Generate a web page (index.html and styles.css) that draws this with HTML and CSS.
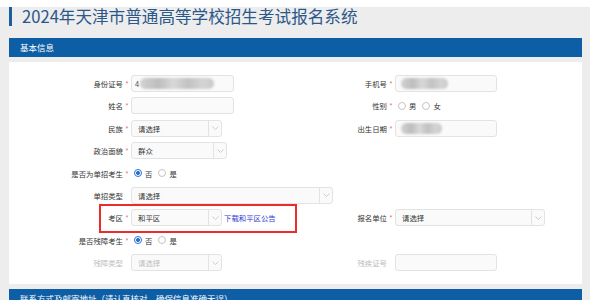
FILE: index.html
```html
<!DOCTYPE html>
<html lang="zh-CN">
<head>
    <meta charset="UTF-8">
    <meta name="viewport" content="width=device-width, initial-scale=1.0">
    <title>2024年天津市普通高等学校招生考试报名系统</title>
    <link rel="stylesheet" href="styles.css">
</head>
<body>
    <div class="page">
        <h1 class="title">2024年天津市普通高等学校招生考试报名系统</h1>
        <div class="panel-head">基本信息</div>
        <div class="panel-body">
            <div class="form">
                <!-- 第1行 -->
                <div class="field">
                    <span class="lbl">身份证号</span><span class="req">*</span>
                    <div class="input w103"><span class="pre">4</span><span class="blur w74"></span></div>
                </div>
                <div class="field">
                    <span class="lbl">手机号</span><span class="req">*</span>
                    <div class="input w102"><span class="blur w47"></span></div>
                </div>
                <!-- 第2行 -->
                <div class="field">
                    <span class="lbl">姓名</span><span class="req">*</span>
                    <div class="input w103"></div>
                </div>
                <div class="field">
                    <span class="lbl">性别</span><span class="req">*</span>
                    <div class="radios">
                        <span class="radio"></span><span class="opt">男</span>
                        <span class="radio"></span><span class="opt">女</span>
                    </div>
                </div>
                <!-- 第3行 -->
                <div class="field">
                    <span class="lbl">民族</span><span class="req">*</span>
                    <div class="select w91">
                        <span class="val">请选择</span>
                        <span class="arrow"><svg width="7" height="4" viewBox="0 0 7 4"><polyline points="0.5,0.5 3.5,3.5 6.5,0.5"/></svg></span>
                    </div>
                </div>
                <div class="field">
                    <span class="lbl">出生日期</span><span class="req">*</span>
                    <div class="input w102"><span class="blur w41"></span></div>
                </div>
                <!-- 第4行 -->
                <div class="field">
                    <span class="lbl">政治面貌</span><span class="req">*</span>
                    <div class="select w96">
                        <span class="val">群众</span>
                        <span class="arrow"><svg width="7" height="4" viewBox="0 0 7 4"><polyline points="0.5,0.5 3.5,3.5 6.5,0.5"/></svg></span>
                    </div>
                </div>
                <div></div>
                <!-- 第5行 -->
                <div class="field">
                    <span class="lbl">是否为单招考生</span><span class="req">*</span>
                    <div class="radios">
                        <span class="radio on"></span><span class="opt">否</span>
                        <span class="radio"></span><span class="opt">是</span>
                    </div>
                </div>
                <div></div>
                <!-- 第6行 -->
                <div class="field">
                    <span class="lbl">单招类型</span><span class="req"></span>
                    <div class="select w202">
                        <span class="val">请选择</span>
                        <span class="arrow"><svg width="7" height="4" viewBox="0 0 7 4"><polyline points="0.5,0.5 3.5,3.5 6.5,0.5"/></svg></span>
                    </div>
                </div>
                <div></div>
                <!-- 第7行 考区（红框标注） -->
                <div class="field mark">
                    <span class="lbl">考区</span><span class="req">*</span>
                    <div class="select w91">
                        <span class="val">和平区</span>
                        <span class="arrow"><svg width="7" height="4" viewBox="0 0 7 4"><polyline points="0.5,0.5 3.5,3.5 6.5,0.5"/></svg></span>
                    </div>
                    <a class="link" href="#">下载和平区公告</a>
                </div>
                <div class="field">
                    <span class="lbl">报名单位</span><span class="req">*</span>
                    <div class="select w150">
                        <span class="val">请选择</span>
                        <span class="arrow"><svg width="7" height="4" viewBox="0 0 7 4"><polyline points="0.5,0.5 3.5,3.5 6.5,0.5"/></svg></span>
                    </div>
                </div>
                <!-- 第8行 -->
                <div class="field">
                    <span class="lbl">是否残障考生</span><span class="req">*</span>
                    <div class="radios">
                        <span class="radio on"></span><span class="opt">否</span>
                        <span class="radio"></span><span class="opt">是</span>
                    </div>
                </div>
                <div></div>
                <!-- 第9行 禁用 -->
                <div class="field off">
                    <span class="lbl">残障类型</span><span class="req"></span>
                    <div class="select w91">
                        <span class="val">请选择</span>
                        <span class="arrow"><svg width="7" height="4" viewBox="0 0 7 4"><polyline points="0.5,0.5 3.5,3.5 6.5,0.5"/></svg></span>
                    </div>
                </div>
                <div class="field off">
                    <span class="lbl">残疾证号</span><span class="req"></span>
                    <div class="input w102"></div>
                </div>
            </div>
        </div>
        <div class="panel-head">联系方式及邮寄地址（请认真核对，确保信息准确无误）</div>
    </div>
</body>
</html>
```

FILE: styles.css
```css
*{
    margin: 0;
    padding: 0;
    box-sizing: border-box;
}
html,body{
    height: 300px;
    overflow: hidden;
}
body{
    background-color: #fff;
    font-family: "Noto Sans CJK SC", "Noto Sans", sans-serif;
}
.page{
    margin-top: 7px;
    padding: 0 8px 0 9px;
    background-color: #ededed;
    height: 320px;
}
.title{
    margin-top: 4px;
    margin-bottom: 12px;
    height: 19px;
    line-height: 19px;
    padding-left: 10px;
    border-left: 3px solid #1d5ea2;
    font-size: 16.6px;
    font-weight: normal;
    color: #2b5889;
    white-space: nowrap;
}
.panel-head{
    height: 19px;
    line-height: 19px;
    padding-left: 11px;
    background-color: #0e5ea6;
    color: #fff;
    font-size: 8.5px;
    white-space: nowrap;
}
.panel-body{
    margin: 5px 0;
    height: 222px;
    padding-top: 13px;
    background-color: #fff;
}
.form{
    display: grid;
    grid-template-columns: 264px 1fr;
    grid-auto-rows: 17px;
    row-gap: 5.4px;
}
.field{
    display: flex;
    align-items: center;
    font-size: 7.4px;
    color: #333;
    white-space: nowrap;
}
.lbl{
    flex: none;
    width: 114px;
    text-align: right;
}
.req{
    flex: none;
    width: 8px;
    text-align: center;
    color: #f56c6c;
}
.input,
.select{
    flex: none;
    height: 17px;
    border: 1px solid #e3e3e3;
    border-radius: 3px;
    background-color: #fafafa;
}
.input{
    display: flex;
    align-items: center;
    padding-left: 5px;
}
.select{
    display: flex;
}
.select .val{
    flex: 1;
    display: flex;
    align-items: center;
    padding-left: 6px;
}
.select .arrow{
    width: 13px;
    border-left: 1px solid #e3e3e3;
    display: flex;
    align-items: center;
    justify-content: center;
}
.arrow polyline{
    fill: none;
    stroke: #c2c2c2;
    stroke-width: 0.8;
}
.w91{ width: 91px; }
.w96{ width: 96px; }
.w102{ width: 102px; }
.w103{ width: 103px; }
.w150{ width: 150px; }
.w202{ width: 202px; }
/* 打码的内容 */
.pre{
    color: #555;
    margin-left: -2px;
}
.blur{
    display: block;
    height: 11px;
    border-radius: 6px;
    background: linear-gradient(90deg, #d2d2d2, #bdbdbd 25%, #d9d9d9 45%, #c2c2c2 65%, #d4d4d4 85%, #cacaca);
    filter: blur(1px);
}
.w74{ width: 74px; margin-left: 1px; }
.w47{ width: 47px; }
.w41{ width: 41px; }
.radios{
    display: flex;
    align-items: center;
    padding-left: 3px;
}
.radio{
    width: 8px;
    height: 8px;
    border: 1px solid #c4c4c4;
    border-radius: 50%;
    margin-right: 3px;
    background-color: #fff;
}
.radio.on{
    border-color: #2b6fd8;
    background: radial-gradient(circle, #2b6fd8 0 1.8px, #fff 2.2px);
}
.opt + .radio{
    margin-left: 6px;
}
.link{
    margin-left: 2px;
    color: #3440d4;
    text-decoration: none;
}
.field.mark{
    position: relative;
}
.field.mark::after{
    content: '';
    position: absolute;
    left: 90px;
    top: -5px;
    width: 194px;
    height: 25px;
    border: 2px solid #ee2b2b;
}
.field.off{
    color: #bdbdbd;
}
```
